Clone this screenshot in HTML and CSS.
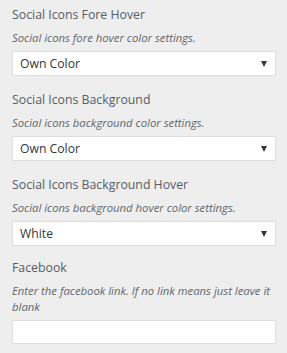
FILE: index.html
```html
<!DOCTYPE html>
<html lang="en">
<head>
    <meta charset="UTF-8">
    <title>Social Icons</title>
    <link rel="stylesheet" href="styles.css">
</head>
<body>
    <div class="controls">
        <div class="control">
            <span class="control-title">Social Icons Fore Hover</span>
            <span class="control-desc">Social icons fore hover color settings.</span>
            <div class="select-wrap">
                <select class="control-select">
                    <option>Own Color</option>
                    <option>White</option>
                </select>
            </div>
        </div>
        <div class="control">
            <span class="control-title">Social Icons Background</span>
            <span class="control-desc">Social icons background color settings.</span>
            <div class="select-wrap">
                <select class="control-select">
                    <option>Own Color</option>
                    <option>White</option>
                </select>
            </div>
        </div>
        <div class="control">
            <span class="control-title">Social Icons Background Hover</span>
            <span class="control-desc">Social icons background hover color settings.</span>
            <div class="select-wrap">
                <select class="control-select">
                    <option>White</option>
                    <option>Own Color</option>
                </select>
            </div>
        </div>
        <div class="control control-link">
            <span class="control-title">Facebook</span>
            <span class="control-desc">Enter the facebook link. If no link means just leave it blank</span>
            <input class="control-input" type="text">
        </div>
    </div>
</body>
</html>
```

FILE: styles.css
```css
body,html{
    margin: 0;
    background-color: #eeeeee;
    font-family: 'Open Sans', sans-serif;
    color: #555d66;
}
.controls{
    padding: 5px 11px 0 12px;
}
.control{
    display: flex;
    flex-direction: column;
    margin-bottom: 14px;
}
.control-link{
    margin-top: -2px;
}
.control-title{
    font-size: 12.3px;
    line-height: 20px;
}
.control-desc{
    margin-top: 5px;
    margin-bottom: 5px;
    font-size: 11.3px;
    line-height: 16px;
    font-style: italic;
    color: #5f666d;
}
.select-wrap{
    position: relative;
}
.select-wrap::after{
    content: '';
    position: absolute;
    right: 9px;
    top: 10px;
    border-left: 3.5px solid transparent;
    border-right: 3.5px solid transparent;
    border-top: 6px solid #32373c;
    pointer-events: none;
}
.control-select,
.control-input{
    box-sizing: border-box;
    width: 100%;
    height: 25px;
    margin: 0;
    border: 1px solid #dddddd;
    background-color: #ffffff;
    font-family: 'Open Sans', sans-serif;
    font-size: 12.2px;
    color: #32373c;
    outline: none;
}
.control-select{
    -webkit-appearance: none;
    appearance: none;
    padding: 0 20px 0 7px;
    border-radius: 0;
}
.control-input{
    padding: 0 8px;
    height: 24px;
}
```
